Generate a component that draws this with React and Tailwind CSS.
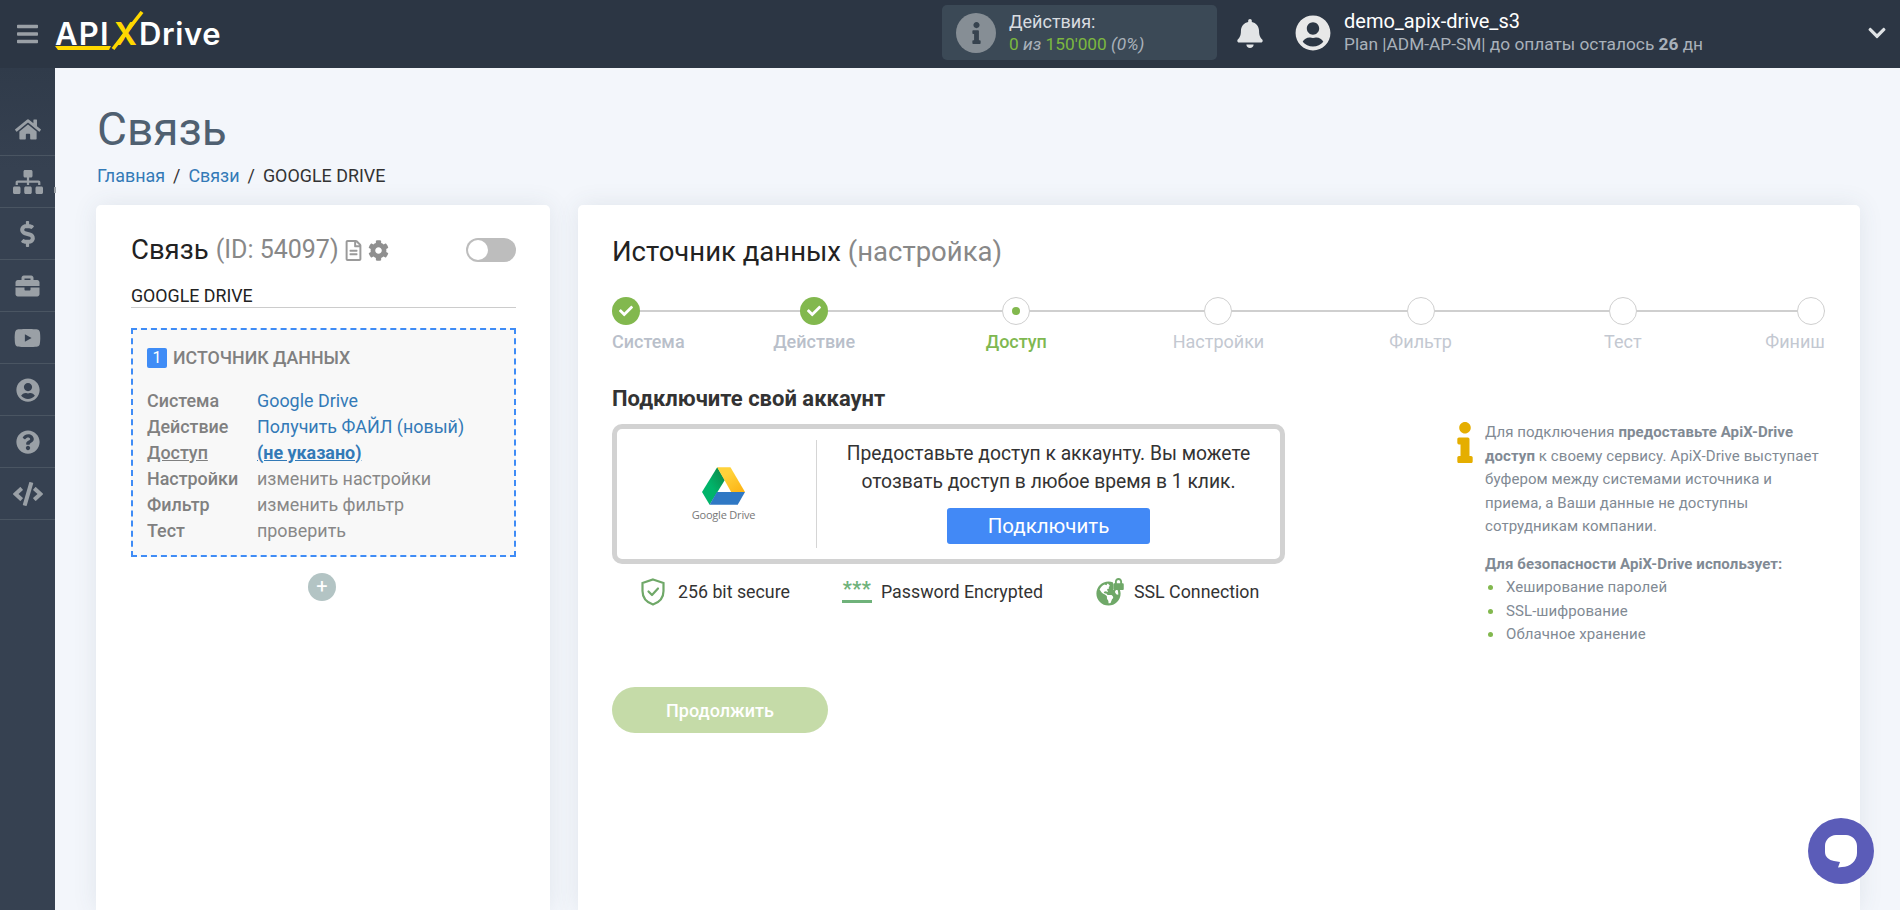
import React from 'react';
import {
  FaBars, FaBell, FaBriefcase, FaCheck, FaChevronDown, FaCode, FaCog, FaDollarSign, FaGlobeAmericas,
  FaHome, FaInfo, FaLock, FaQuestionCircle, FaRegFileAlt, FaSitemap, FaUserCircle, FaYoutube,
} from 'react-icons/fa';

const navIcons = [
  { key: 'home', Icon: FaHome, cls: 'w-[26px] h-[23px]' },
  { key: 'sitemap', Icon: FaSitemap, cls: 'w-[30px] h-[24px]' },
  { key: 'billing', Icon: FaDollarSign, cls: 'w-[15px] h-[26px]' },
  { key: 'cases', Icon: FaBriefcase, cls: 'w-[25px] h-[24px]' },
  { key: 'video', Icon: FaYoutube, cls: 'w-[27px] h-[24px]' },
  { key: 'profile', Icon: FaUserCircle, cls: 'w-[24px] h-[24px]' },
  { key: 'help', Icon: FaQuestionCircle, cls: 'w-[24px] h-[24px]' },
  { key: 'dev', Icon: FaCode, cls: 'w-[30px] h-[24px]' },
];

const steps = [
  { label: 'Система', state: 'done', cls: 'w-[101px] items-start' },
  { label: 'Действие', state: 'done', cls: 'w-[202.2px] items-center' },
  { label: 'Доступ', state: 'active', cls: 'w-[202.2px] items-center' },
  { label: 'Настройки', state: 'todo', cls: 'w-[202.2px] items-center' },
  { label: 'Фильтр', state: 'todo', cls: 'w-[202.2px] items-center' },
  { label: 'Тест', state: 'todo', cls: 'w-[202.2px] items-center' },
  { label: 'Финиш', state: 'todo', cls: 'w-[101px] items-end' },
];

const sourceRows = [
  { label: 'Система', value: 'Google Drive', valueCls: 'text-[#337ab7]' },
  { label: 'Действие', value: 'Получить ФАЙЛ (новый)', valueCls: 'text-[#337ab7]' },
  { label: 'Доступ', value: '(не указано)', valueCls: 'text-[#337ab7] font-bold underline', labelCls: 'underline' },
  { label: 'Настройки', value: 'изменить настройки', valueCls: 'text-[#888888]' },
  { label: 'Фильтр', value: 'изменить фильтр', valueCls: 'text-[#888888]' },
  { label: 'Тест', value: 'проверить', valueCls: 'text-[#888888]' },
];

const Logo = () => (
  <div className="relative w-[170px] h-[44px] flex items-center text-white font-['Inter',sans-serif] font-semibold text-[31px] leading-none pt-[1px]">
    <span className="w-[57px] tracking-[1.2px]">API</span>
    <span className="w-[27px] text-[#ffd800] font-bold text-[31px] text-center">X</span>
    <span className="tracking-[0.6px]">Drive</span>
    {/* yellow slash and underline of the mark */}
    <svg className="absolute left-0 top-0" width="170" height="44" viewBox="0 0 170 44" fill="none">
      <polygon points="0,35 56,35 54,39 3,39" fill="#ffd800" />
      <line x1="58" y1="38" x2="87" y2="1" stroke="#ffd800" strokeWidth="3.6" />
    </svg>
  </div>
);

const Header = () => (
  <header className="h-[68px] shrink-0 bg-[#2c3644] flex items-center">
    <div className="w-[942px] shrink-0 flex items-center pl-[17px]">
      <FaBars className="w-[21px] h-[24px] text-[#9aa0a6]" />
      <div className="ml-[17px] -mt-[3px]">
        <Logo />
      </div>
    </div>
    <div className="w-[275px] h-[55px] -mt-[3px] rounded-[5px] bg-[#3b4956] flex items-center pl-[14px]">
      <div className="w-[40px] h-[40px] rounded-full bg-[#868e95] flex items-center justify-center">
        <FaInfo className="w-[9px] h-[22px] text-[#37434f]" />
      </div>
      <div className="ml-[13px] leading-[23px]">
        <div className="text-[18px] text-[#d8dce0]">Действия:</div>
        <div className="text-[17.3px] text-[#7cb73f]">
          0 <span className="italic text-[#a9b1ba]">из</span> 150'000 <span className="italic text-[#a9b1ba]">(0%)</span>
        </div>
      </div>
    </div>
    <FaBell className="ml-[20px] w-[26px] h-[29px] -mt-[2px] text-[#e2e4e6]" />
    <FaUserCircle className="ml-[32px] w-[36px] h-[36px] -mt-[2px] text-[#e8e8e8]" />
    <div className="ml-[13px] -mt-[3px] whitespace-nowrap">
      <div className="text-[20px] leading-[23px] text-white">demo_apix-drive_s3</div>
      <div className="text-[17.3px] leading-[23px] text-[#a9b1ba]">
        Plan |ADM-AP-SM| до оплаты осталось <b>26</b> дн
      </div>
    </div>
    <FaChevronDown className="ml-auto mr-[13px] w-[20px] h-[20px] -mt-[2px] text-[#dfe2e5]" />
  </header>
);

const Sidebar = () => (
  <aside className="relative w-[55px] shrink-0 pt-[36px] bg-linear-to-b from-[#303b4a] to-[#364151] to-[12%]">
    {navIcons.map(({ key, Icon, cls }) => (
      <div key={key} className="h-[52px] flex items-center justify-center border-b border-[#4a5562]">
        <Icon className={`${cls} text-[#9aa0a6]`} />
      </div>
    ))}
    <div className="absolute right-[-1px] top-[119px] w-[2px] h-[6px] bg-[#9aa0a6]" />
  </aside>
);

const StepCircle = ({ state }) => {
  if (state === 'done') {
    return (
      <div className="w-[28px] h-[28px] rounded-full bg-[#82b84e] flex items-center justify-center">
        <FaCheck className="w-[16px] h-[14px] text-white" />
      </div>
    );
  }
  return (
    <div className="w-[28px] h-[28px] rounded-full bg-white border border-[#cfcfcf] flex items-center justify-center">
      {state === 'active' && <div className="w-[8px] h-[8px] rounded-full bg-[#82b84e]" />}
    </div>
  );
};

const Stepper = () => (
  <div className="relative flex mt-[28px]">
    <div className="absolute left-0 right-0 top-[13px] h-[2px] bg-[#cfcfcf]" />
    {steps.map((step) => (
      <div key={step.label} className={`relative flex flex-col ${step.cls}`}>
        <StepCircle state={step.state} />
        <span
          className={`mt-[6px] text-[18px] leading-[22px] whitespace-nowrap ${
            step.state === 'active'
              ? 'text-[#7fb851] font-medium'
              : step.state === 'done'
                ? 'text-[#b9bfca] font-medium'
                : 'text-[#c3c8d1]'
          }`}
        >
          {step.label}
        </span>
      </div>
    ))}
  </div>
);

const SourceCard = () => (
  <section className="w-[454px] shrink-0 rounded-t-[5px] bg-white pt-[29px] pl-[35px] pr-[34px] shadow-[0_0_24px_rgba(60,75,100,0.1)]">
    <div className="flex items-center h-[32px]">
      <span className="text-[27.5px] leading-[34px] text-[#222]">Связь</span>
      <span className="ml-[7px] text-[25px] leading-[34px] text-[#888]">(ID: 54097)</span>
      <FaRegFileAlt className="ml-[6px] w-[17px] h-[21px] text-[#9a9a9a]" />
      <FaCog className="ml-[6px] w-[21px] h-[21px] text-[#8f8f8f]" />
      <div className="ml-auto w-[50px] h-[24px] rounded-full bg-[#bdbdbd] flex items-center pl-[2px]">
        <div className="w-[20px] h-[20px] rounded-full bg-white" />
      </div>
    </div>
    <div className="mt-[17px] h-[24px] text-[17.8px] leading-[26px] text-[#222] border-b border-[#cccccc] box-content">GOOGLE DRIVE</div>
    <div className="mt-[20px] border-2 border-dashed border-[#3f8cf6] bg-[#f8f8f8] pt-[18px] pb-[11px] px-[14px]">
      <div className="flex items-center h-[20px]">
        <span className="w-[20px] h-[20px] rounded-[2px] bg-[#3f8cf6] text-white text-[16px] leading-[20px] text-center">1</span>
        <span className="ml-[6px] text-[17.8px] font-medium text-[#808080]">ИСТОЧНИК ДАННЫХ</span>
      </div>
      <div className="mt-[20px]">
        {sourceRows.map((row) => (
          <div key={row.label} className="flex h-[26px] items-center text-[17.9px]">
            <span className={`w-[110px] shrink-0 text-[#808080] font-medium ${row.labelCls || ''}`}>{row.label}</span>
            <span className={row.valueCls}>{row.value}</span>
          </div>
        ))}
      </div>
    </div>
    <div className="mt-[16px] ml-[177px] w-[28px] h-[28px] rounded-full bg-[#b3c4c4] text-white text-[20px] leading-[27px] text-center">+</div>
  </section>
);

const DriveLogo = () => (
  <div className="flex flex-col items-center">
    <svg width="43" height="38" viewBox="0 0 130 113">
      <defs>
        <linearGradient id="driveGreen" x1="0.8" y1="0.1" x2="0.4" y2="0.5">
          <stop offset="0" stopColor="#0a8f4f" />
          <stop offset="1" stopColor="#00b46a" />
        </linearGradient>
        <linearGradient id="driveYellow" x1="0.3" y1="0.3" x2="0.8" y2="1">
          <stop offset="0" stopColor="#ffd23a" />
          <stop offset="1" stopColor="#fdb515" />
        </linearGradient>
      </defs>
      <polygon points="46,0 69,38 23,113 0,75" fill="url(#driveGreen)" />
      <polygon points="46,0 86,0 130,75 88,75" fill="url(#driveYellow)" />
      <polygon points="45,75 130,75 108,113 23,113" fill="#2f78c4" />
    </svg>
    <span className="mt-[3px] font-['Open_Sans',sans-serif] text-[11px] leading-[14px] tracking-[-0.2px] text-[#777]">Google Drive</span>
  </div>
);

const ConnectBox = () => (
  <div className="mt-[11px] h-[140px] flex rounded-[10px] border-[5px] border-[#d2d2d2] bg-white">
    <div className="w-[200px] h-[108px] self-center shrink-0 border-r border-[#d5d5d5] flex items-center justify-center pl-[14px]">
      <DriveLogo />
    </div>
    <div className="flex-1 flex flex-col items-center pt-[11px]">
      <p className="text-[19.3px] leading-[28px] text-[#333] text-center whitespace-nowrap">
        Предоставьте доступ к аккаунту. Вы можете
        <br />
        отозвать доступ в любое время в 1 клик.
      </p>
      <button type="button" className="mt-[12px] w-[203px] h-[36px] rounded-[3px] bg-[#4289f6] text-white text-[20.5px]">
        Подключить
      </button>
    </div>
  </div>
);

const TrustRow = () => (
  <div className="mt-[14px] h-[28px] pl-[29px] flex items-center text-[17.8px] text-[#333] whitespace-nowrap">
    <svg width="24" height="28" viewBox="0 0 24 28" fill="none" stroke="#6fa868" strokeWidth="2.2">
      <path d="M12 1.5 L22.5 5 V13 C22.5 20 18 24.5 12 26.5 C6 24.5 1.5 20 1.5 13 V5 Z" />
      <path d="M7.5 13.5 L11 17 L17 10.5" strokeLinecap="round" strokeLinejoin="round" />
    </svg>
    <span className="ml-[13px] w-[112px]">256 bit secure</span>
    <div className="ml-[52px] w-[30px] flex flex-col items-center">
      <span className="text-[#6fb27a] text-[20px] leading-[14px] font-bold tracking-[0.5px] h-[14px]">***</span>
      <div className="mt-[4px] w-[30px] h-[3px] bg-[#6fb27a]" />
    </div>
    <span className="ml-[9px] w-[162px]">Password Encrypted</span>
    <div className="relative ml-[53px] w-[26px] h-[28px]">
      <FaGlobeAmericas className="absolute left-0 bottom-0 w-[25px] h-[25px] text-[#6fa868]" />
      <FaLock className="absolute right-[-2px] top-0 w-[11px] h-[12px] text-[#6fa868] bg-white" />
    </div>
    <span className="ml-[12px]">SSL Connection</span>
  </div>
);

const InfoColumn = () => (
  <div className="ml-[172px] pt-[36px] flex text-[15px] leading-[23.5px] text-[#818a94] tracking-[0.08px]">
    <FaInfo className="w-[16px] h-[41px] mt-[1px] shrink-0 text-[#e5ae00]" />
    <div className="ml-[12px] whitespace-nowrap">
      <p>
        Для подключения <b>предоставьте ApiX-Drive</b>
        <br />
        <b>доступ</b> к своему сервису. ApiX-Drive выступает
        <br />
        буфером между системами источника и
        <br />
        приема, а Ваши данные не доступны
        <br />
        сотрудникам компании.
      </p>
      <p className="mt-[14px] font-bold">Для безопасности ApiX-Drive использует:</p>
      <ul>
        {['Хеширование паролей', 'SSL-шифрование', 'Облачное хранение'].map((item) => (
          <li key={item} className="flex items-center">
            <span className="ml-[3px] w-[5px] h-[5px] rounded-full bg-[#82b84e]" />
            <span className="ml-[13px]">{item}</span>
          </li>
        ))}
      </ul>
    </div>
  </div>
);

const SettingsCard = () => (
  <section className="flex-1 rounded-t-[5px] bg-white pt-[29px] pl-[34px] pr-[35px] shadow-[0_0_24px_rgba(60,75,100,0.1)]">
    <h2 className="text-[27.5px] leading-[35px] text-[#222]">
      Источник данных <span className="text-[#888]">(настройка)</span>
    </h2>
    <Stepper />
    <div className="flex mt-[32px]">
      <div className="w-[673px] shrink-0">
        <h3 className="text-[22px] leading-[28px] font-bold text-[#333]">Подключите свой аккаунт</h3>
        <ConnectBox />
        <TrustRow />
        <button
          type="button"
          className="mt-[81px] w-[216px] h-[46px] rounded-full bg-[#c5dba8] text-white text-[18px] font-medium"
        >
          Продолжить
        </button>
      </div>
      <InfoColumn />
    </div>
  </section>
);

const ChatButton = () => (
  <div className="absolute right-[26px] bottom-[26px] w-[66px] h-[66px] rounded-full bg-[#5b5cb8] flex items-center justify-center">
    <svg width="32" height="33" viewBox="0 0 32 33" fill="white">
      <path d="M11 0 H21 C27 0 32 5 32 11 V18 C32 26 25 32 17 32 L13 32.5 L15 27 L9 26 C4 25 0 22 0 17 V11 C0 5 5 0 11 0 Z" />
    </svg>
  </div>
);

export default function App() {
  return (
    <div className="relative w-[1900px] h-[910px] overflow-hidden flex flex-col bg-[#f3f6fb] font-['Roboto',sans-serif]">
      <Header />
      <div className="flex flex-1 min-h-0">
        <Sidebar />
        <main className="flex-1 flex flex-col pl-[41px] pr-[40px] pt-[36px]">
          <h1 className="pl-[1px] text-[46px] leading-[50px] text-[#4f6071]">Связь</h1>
          <nav className="mt-[10px] pl-[1px] flex items-center h-[24px] text-[17.9px] whitespace-nowrap">
            <span className="text-[#337ab7]">Главная</span>
            <span className="mx-[8px] text-[#333]">/</span>
            <span className="text-[#337ab7]">Связи</span>
            <span className="mx-[8px] text-[#333]">/</span>
            <span className="text-[#333]">GOOGLE DRIVE</span>
          </nav>
          <div className="mt-[17px] flex flex-1 min-h-0 gap-[28px]">
            <SourceCard />
            <SettingsCard />
          </div>
        </main>
      </div>
      <ChatButton />
    </div>
  );
}
